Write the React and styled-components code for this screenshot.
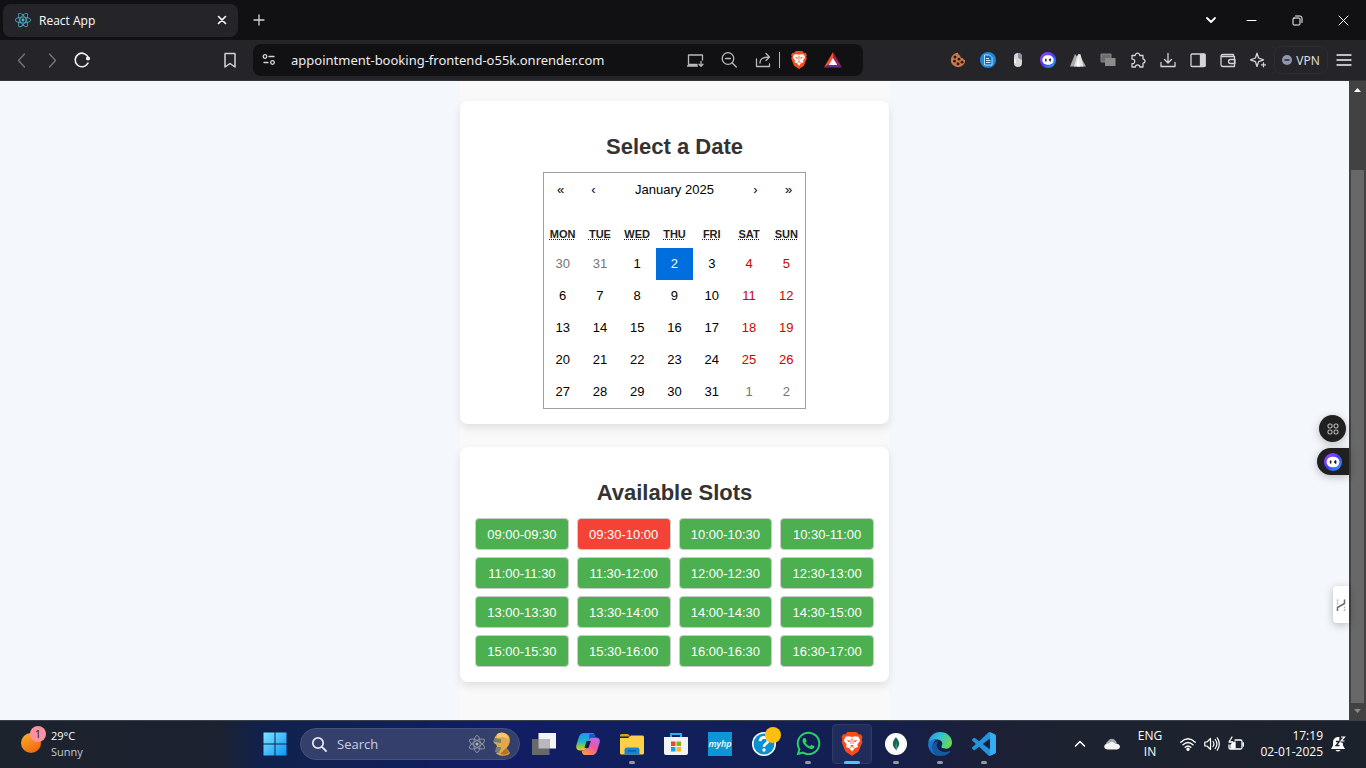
import React from "react";
import styled, { createGlobalStyle, css } from "styled-components";
import { SiMongodb, SiReact } from "react-icons/si";
import { FaWhatsapp } from "react-icons/fa";

const GlobalStyle = createGlobalStyle`
  *, *::before, *::after { box-sizing: border-box; }
  body {
    margin: 0;
    background: #111113;
    font-family: "Open Sans", "Noto Sans", sans-serif;
  }
  button, input { font: inherit; color: inherit; }
  button { padding: 0; border: 0; background: none; cursor: pointer; }
  svg { display: block; flex: none; }
`;

/* ---------- shell ---------- */

const Desktop = styled.div`
  display: flex;
  flex-direction: column;
  min-height: 100vh;
`;

const TabStrip = styled.header`
  display: flex;
  align-items: center;
  height: 40px;
  padding-left: 3px;
  background: #111113;
  color: #fff;
`;

const Tab = styled.div`
  display: flex;
  align-items: center;
  gap: 8px;
  width: 235px;
  height: 33px;
  padding: 0 8px 0 12px;
  border-radius: 8px;
  background: #252529;
  font-size: 12px;
`;

const TabTitle = styled.span`
  flex: 1;
`;

const IconButton = styled.button`
  display: flex;
  align-items: center;
  justify-content: center;
  flex: none;
  width: ${(p) => p.$w || 30}px;
  height: ${(p) => p.$h || 32}px;
  color: ${(p) => p.$color || "#d4d4d8"};
`;

const WindowControls = styled.div`
  display: flex;
  margin-left: auto;
`;

const Toolbar = styled.nav`
  display: flex;
  align-items: center;
  height: 41px;
  background: #252529;
  border-bottom: 1px solid #37323a;
`;

const NavGroup = styled.div`
  display: flex;
  flex: 0 0 253px;
  padding: 0 8px 0 7px;
`;

const Spacer = styled.span`
  flex: 1;
`;

const AddressBar = styled.div`
  display: flex;
  align-items: center;
  flex: 0 1 610px;
  min-width: 0;
  height: 32px;
  padding: 0 13px 0 0;
  border-radius: 8px;
  background: #111113;
`;

const AddressInput = styled.input`
  flex: 1;
  min-width: 0;
  margin-left: 6px;
  padding: 0;
  border: 0;
  outline: 0;
  background: none;
  color: #ececef;
  font-family: "Noto Sans", "Open Sans", sans-serif;
  font-size: 13px;
`;

const Divider = styled.span`
  width: 1px;
  height: 16px;
  margin-right: 2px;
  background: #b4b4b8;
`;

const Extensions = styled.div`
  display: flex;
  align-items: center;
  margin-left: auto;
  padding-right: 7px;
`;

const VpnButton = styled.button`
  display: flex;
  align-items: center;
  justify-content: center;
  gap: 4px;
  width: 54px;
  height: 28px;
  margin: 0 1px;
  border: 1px solid #2d2d33;
  border-radius: 8px;
  color: #e4e4e8;
  font-size: 12px;
`;

/* ---------- web page ---------- */

const Viewport = styled.div`
  position: relative;
  display: flex;
  flex: 1;
  background: #f4f7fc;
`;

const PageArea = styled.main`
  flex: 1;
  display: flex;
  justify-content: center;
  font-family: "Liberation Sans", Arial, sans-serif;
`;

const Column = styled.div`
  display: flex;
  flex-direction: column;
  gap: 23px;
  width: 429px;
  padding: 20px 0;
  background: #f9f9f9;
`;

const Card = styled.section`
  padding: 15px;
  border-radius: 8px;
  background: #fff;
  box-shadow: 0 4px 8px rgba(0, 0, 0, 0.1);
`;

const CardTitle = styled.h2`
  margin: 18px 0 12px;
  color: #333;
  font-size: 22px;
  line-height: 26px;
  text-align: center;
`;

const Calendar = styled.div`
  width: 263px;
  margin: 0 auto;
  border: 1px solid #a0a096;
  background: #fff;
`;

const CalendarNav = styled.div`
  display: flex;
  height: 32px;
  margin-bottom: 14px;
  font-size: 13px;
`;

const NavArrow = styled.button`
  width: 33px;
`;

const NavLabel = styled.button`
  flex: 1;
`;

const MonthTable = styled.table`
  width: 100%;
  table-layout: fixed;
  border-collapse: collapse;
`;

const Weekday = styled.th`
  height: 29px;
  padding: 0;
  color: #222;
  font-size: 11px;
  line-height: 14px;
  text-transform: uppercase;

  abbr { text-decoration: underline dotted; }
`;

const DayCell = styled.td`
  padding: 0;
`;

const DAY_COLORS = { other: "#757575", weekend: "#d10000", normal: "#000" };

const DayButton = styled.button`
  display: block;
  width: 100%;
  height: 32px;
  padding-bottom: 2px;
  background: ${(p) => (p.$selected ? "#006edc" : "transparent")};
  color: ${(p) => (p.$selected ? "#fff" : DAY_COLORS[p.$kind])};
  font-size: 13px;
`;

const SlotGrid = styled.div`
  display: grid;
  grid-template-columns: repeat(4, 1fr);
  gap: 7px 8px;
`;

const SlotButton = styled.button`
  height: 32px;
  border: 1px solid #ccc;
  border-radius: 4px;
  background: ${(p) => (p.$booked ? "#f44336" : "#4caf50")};
  color: #fff;
  font-size: 13px;
`;

const Scrollbar = styled.div`
  display: flex;
  flex-direction: column;
  width: 17px;
  background: #424242;
`;

const ScrollTrack = styled.div`
  flex: 1;
  display: flex;
  padding: 72px 2px 0;
`;

const ScrollThumb = styled.div`
  flex: 1;
  background: #686868;
`;

const Floating = styled.button`
  position: absolute;
  display: flex;
  align-items: center;
  justify-content: center;
  box-shadow: 0 2px 8px rgba(0, 0, 0, 0.25);
  ${(p) =>
    p.$kind === "apps" &&
    css`
      right: 20px; bottom: 278px; width: 27px; height: 27px;
      border-radius: 50%; background: #202020;
    `}
  ${(p) =>
    p.$kind === "bot" &&
    css`
      right: 17px; bottom: 245px; width: 32px; height: 27px;
      border-radius: 14px 0 0 14px; background: #202020;
    `}
  ${(p) =>
    p.$kind === "side" &&
    css`
      right: 17px; bottom: 97px; width: 16px; height: 37px;
      border-radius: 4px 0 0 4px; background: #fff;
    `}
`;

/* ---------- taskbar ---------- */

const Taskbar = styled.footer`
  display: flex;
  align-items: center;
  height: 48px;
  padding-bottom: 2px;
  border-top: 1px solid #3c414b;
  background: linear-gradient(
    90deg,
    #1d232d 0%, #1b2230 16%, #11214c 19%, #10205a 30%,
    #111d66 36%, #11205a 50%, #131f52 62%, #1b2038 72%, #1d2230 78%, #1c222c 100%
  );
  color: #fff;
  font-size: 12px;
`;

const Weather = styled.button`
  display: flex;
  align-items: center;
  gap: 4px;
  flex: 0 0 253px;
  padding-left: 19px;
  color: #fff;
  text-align: left;
  font-size: 11px;
  line-height: 16px;
`;

const Muted = styled.span`
  display: block;
  color: #c4c7cc;
`;

const SearchBox = styled.label`
  display: flex;
  align-items: center;
  width: 220px;
  height: 32px;
  margin: 0 2px 0 3px;
  padding: 0 7px 0 10px;
  border: 1px solid #47517c;
  border-radius: 16px;
  background: #343f6c;
`;

const SearchInput = styled.input`
  flex: 1;
  min-width: 0;
  margin-left: 10px;
  padding: 0;
  border: 0;
  outline: 0;
  background: none;
  font-size: 13px;

  &::placeholder { color: #cdd1de; opacity: 1; }
`;

const AppButton = styled.button`
  position: relative;
  display: flex;
  align-items: center;
  justify-content: center;
  width: 40px;
  height: 40px;
  margin: 0 2px;
  border-radius: 4px;
  border: 1px solid ${(p) => (p.$active ? "#2f3a68" : "transparent")};
  background: ${(p) => (p.$active ? "#202c5c" : "transparent")};

  &::after {
    content: "";
    position: absolute;
    bottom: -1px;
    left: 50%;
    height: 3px;
    width: ${(p) => (p.$active ? 16 : 6)}px;
    border-radius: 2px;
    background: ${(p) => (p.$active ? "#4cc2ff" : "#9499a8")};
    transform: translateX(-50%);
    display: ${(p) => (p.$active || p.$running ? "block" : "none")};
  }
`;

const HpTile = styled.span`
  display: flex;
  align-items: center;
  justify-content: center;
  width: 24px;
  height: 24px;
  background: #0b97d6;
  color: #fff;
  font-size: 9px;
  font-style: italic;
  font-weight: 600;
`;

const Tray = styled.div`
  display: flex;
  align-items: center;
  margin-left: auto;
  padding-right: 16px;
`;

const Language = styled.button`
  width: 44px;
  margin-right: 4px;
  color: #fff;
  font-size: 12px;
  line-height: 16px;
`;

const Clock = styled.button`
  width: 75px;
  margin-right: 3px;
  color: #fff;
  font-size: 12px;
  line-height: 16px;
  text-align: right;
`;

/* ---------- icons ---------- */

const Line = ({ size = 18, w = 1.3, box = 18, children, ...rest }) => (
  <svg width={size} height={size} viewBox={`0 0 ${box} ${box}`} fill="none" stroke="currentColor"
    strokeWidth={w} strokeLinecap="round" strokeLinejoin="round" aria-hidden="true" {...rest}>
    {children}
  </svg>
);

const Art = ({ size = 24, box = 24, children }) => (
  <svg width={size} height={size} viewBox={`0 0 ${box} ${box}`} aria-hidden="true">{children}</svg>
);

const BraveMark = ({ size }) => (
  <Art size={size}>
    <path d="M7.500 0h9l2.300 2.500 2-.300 1.700 3-.800 2 .600 3-3.800 9.300L12 24l-6.500-4.500L1.700 10.200l.6-3-.8-2 1.700-3 2 .3z" fill="#fb4a1b" />
    <path d="m5.500 4.800 3.700-.5 2.800.8 2.800-.8 3.700.5 1.700 4-2.800 3.500.4 2.600-3 1.300L12 19.500l-2.800-3.300-3-1.300.4-2.600-2.800-3.500z" fill="#fff" />
    <path d="m6.600 8 3.800.8-1.300 1.700zM17.400 8l-3.800.8 1.300 1.700zM10.200 13h3.600L12 14.800z" fill="#fb4a1b" />
    <path d="M11.300 6.500 10.800 12M12.700 6.500l.5 5.500M9.500 15.800l2.500-1.300 2.500 1.300" stroke="#fb4a1b" strokeWidth=".7" fill="none" />
  </Art>
);

const BotFace = ({ size = 18, id }) => (
  <Art size={size} box={18}>
    <defs>
      <linearGradient id={id} x1="0" y1="0" x2="1" y2="1">
        <stop offset="0" stopColor="#b04bff" />
        <stop offset=".5" stopColor="#4a3df5" />
        <stop offset="1" stopColor="#21b5ff" />
      </linearGradient>
    </defs>
    <circle cx="9" cy="9" r="9" fill={`url(#${id})`} />
    <rect x="2.600" y="3.700" width="12.800" height="10.600" rx="5.300" fill="#fff" />
    <path d="M6.600 7.600v3M12.200 7.600l-1.400 1.500 1.400 1.400" stroke="#17132c" strokeWidth="1.600" fill="none" />
  </Art>
);

const extensionIcons = [
  ["Cookies", <Art size={16} box={16} key="c">
    <path d="M8 .8a7.200 7.200 0 1 0 7.200 7.200c-1.500 0-2.300-.8-2.400-2-1.700.1-2.700-.9-2.500-2.300C8.900 3.300 8 2.300 8 .8z" fill="#cb7a4d" />
    <g fill="#2b1710"><circle cx="5" cy="5" r="1.500" /><circle cx="9" cy="7.200" r="1.400" /><circle cx="4.500" cy="9.200" r="1.400" />
      <circle cx="8" cy="11.800" r="1.500" /><circle cx="12" cy="10.200" r="1.400" /></g>
  </Art>],
  ["Reader", <Art size={16} box={16} key="r">
    <circle cx="8" cy="8" r="8" fill="#1e88dc" />
    <path d="M4.500 3h5l2.500 2.500V13H4.500z" fill="#1668b4" stroke="#b7dcff" />
    <path d="M6 6.500h3M6 8.500h4.500M6 10.500h4.500" stroke="#d4ebff" />
  </Art>],
  ["Mouse", <Art size={16} box={16} key="m">
    <rect x="4" y="1" width="8" height="14" rx="4" fill="#d8d6d2" />
    <path d="M8 1a4 4 0 0 1 4 4v3L8 6z" fill="#8b90a4" />
    <path d="M5 7v4" stroke="#f5f5f3" strokeWidth="1.500" />
  </Art>],
  ["Assistant", <BotFace size={16} id="botToolbar" key="b" />],
  ["Peaks", <Art size={16} box={16} key="p">
    <path d="M0 14.500 5 2l2 2.500L9 2l7 12.500z" fill="#a9a9a9" />
    <path d="M4 14.500 7 4.500 8.500 2l2 .2 3 12.300z" fill="#e4e4e4" />
    <path d="M8.200 5 7 14.500h3z" fill="#fff" />
  </Art>],
  ["Layers", <Art size={16} box={16} key="l">
    <path d="M1 2h10v8H1z" fill="#6d6d6d" stroke="#858585" />
    <path d="M5 6h10.500v8H5z" fill="#8b8b8b" />
  </Art>],
  ["Extensions", <Line key="e"><path d="M3 4.500h3.200a2.300 2.300 0 1 1 4.600 0H14v3.600a2 2 0 1 1 0 4V16h-3.200a2.200 2.200 0 0 0-4.400 0H3v-3.400a2.300 2.300 0 1 0 0-4.500z" /></Line>],
  ["Downloads", <Line key="d"><path d="M9 2.500v9M5.500 8.500 9 12l3.500-3.500M2 11.500v4h14v-4" /></Line>],
  ["Sidebar", <Line key="s"><rect x="2" y="3" width="14" height="12.500" rx="1" /><path d="M11.500 3.500H16V15h-4.500z" fill="currentColor" /></Line>],
  ["Wallet", <Line key="w"><path d="M14.500 5.500v-2H4a2 2 0 0 0-2 1.500v9a2 2 0 0 0 2 1.500h11.500V5.500H3M16 8.500h-4.500a2 2 0 0 0 0 4H16z" /></Line>],
  ["Leo AI", <Line key="a"><path d="M8 2.200 9.600 7l4.900 1.800-4.900 1.800L8 15.500l-1.600-4.900L1.500 8.800 6.400 7zM14.500 11.800v4M12.500 13.800h4" /></Line>],
];

const taskApps = [
  { name: "Task view", icon: <Art><path d="M6.500 1H24v15.500H6.500z" fill="#f4f4f5" /><path d="M0 7h17.500v16H0z" fill="#68686a" /><path d="M6.500 7h11v9.500h-11z" fill="#b9b9bb" /></Art> },
  { name: "Copilot", icon: (
    <Art>
      <defs>
        <linearGradient id="coA" x1="0" y1="0" x2="0" y2="1"><stop offset="0" stopColor="#1c92f4" /><stop offset=".5" stopColor="#22b8c8" /><stop offset=".8" stopColor="#a5c83a" /><stop offset="1" stopColor="#f9c52c" /></linearGradient>
        <linearGradient id="coB" x1="0.800" y1="0" x2="0.200" y2="1"><stop offset="0" stopColor="#b56bf3" /><stop offset=".5" stopColor="#ef5a9a" /><stop offset="1" stopColor="#ff9a4a" /></linearGradient>
      </defs>
      <path d="M8 1h8c2 0 2.600 1.600 3.200 3.500L16 5.500c-2 0-2.700 1-3.300 3L11 15c-.6 2.200-1.600 3.500-4 3.500H4c-3 0-4.400-2-3.600-5.500L3 4.800C3.800 2.300 5.400 1 8 1z" fill="url(#coA)" />
      <path d="M17 5.500h3c3 0 4.500 2 3.600 5.300L21 19c-.9 2.700-2.500 4-5 4H9c-2 0-2.800-1.500-3.300-3.800L7 18.500c2.400 0 3.400-1.300 4-3.500l1.700-6.500c.6-2 1.800-3 4.300-3z" fill="url(#coB)" />
      <path d="M13.500 2H16c2 0 2.600 1.600 3.200 3.500h-3c-1.500 0-2.400.6-3 1.700z" fill="#1656c9" />
      <path d="m10.500 9-2 7h4l2.300-7z" fill="#10205a" />
    </Art>) },
  { name: "File Explorer", running: true, icon: <Art><path d="M0 3.500Q0 2 1.500 2H8l2.500 2.500H0z" fill="#e0a100" /><path d="M0 6h8l3-2.500h11.500Q24 3.500 24 5v16q0 1.500-1.500 1.500h-21Q0 22.500 0 21z" fill="#ffcf48" /><path d="M4.500 22.500V18q0-2.500 2.500-2.500h10q2.500 0 2.500 2.500v4.500z" fill="#1583d8" /><path d="M8 19h8" stroke="#0b5ea8" strokeWidth="1.500" /></Art> },
  { name: "Microsoft Store", icon: <Art><path d="M7 6V2h10v4" fill="none" stroke="#28b0f0" strokeWidth="2" /><path d="M0 5h24v16q0 2-2 2H2q-2 0-2-2z" fill="#f2f3f5" /><path d="M7 9.500h4.500V14H7z" fill="#e8492b" /><path d="M12.500 9.500H17V14h-4.500z" fill="#7cb713" /><path d="M7 15h4.500v4.500H7z" fill="#10a2ee" /><path d="M12.500 15H17v4.500h-4.500z" fill="#fdb815" /></Art> },
  { name: "myHP", icon: <HpTile>myhp</HpTile> },
  { name: "Get help", icon: (
    <Art size={34} box={34}>
      <circle cx="17" cy="17" r="12" fill="#fff" /><circle cx="17" cy="17" r="10.500" fill="#0d90cf" />
      <path d="M13 14.200q.5-3.900 4.300-3.900 3.700.2 3.700 3.300 0 2.200-2.200 3.300-1.800 1-1.800 2.800" fill="none" stroke="#fff" strokeWidth="2.700" />
      <circle cx="17" cy="23" r="1.700" fill="#fff" />
      <circle cx="26" cy="8" r="8" fill="#ffbf0f" />
    </Art>) },
  { name: "WhatsApp", running: true, icon: <FaWhatsapp size={27} color="#25d366" /> },
  { name: "Brave", active: true, icon: <BraveMark size={24} /> },
  { name: "MongoDB Compass", running: true, icon: <Art><circle cx="12" cy="12" r="11" fill="#fff" /><svg x="5" y="5" width="14" height="14"><SiMongodb size={14} color="#0f6b4d" /></svg></Art> },
  { name: "Edge", running: true, icon: (
    <Art>
      <defs>
        <linearGradient id="edA" x1="0" y1="0" x2="1" y2=".4"><stop offset="0" stopColor="#2492e0" /><stop offset=".5" stopColor="#32bfd8" /><stop offset="1" stopColor="#62d95a" /></linearGradient>
        <linearGradient id="edB" x1="0" y1="0" x2="0" y2="1"><stop offset="0" stopColor="#1b7fd6" /><stop offset="1" stopColor="#1466bd" /></linearGradient>
      </defs>
      <path d="M.2 11C1 4.500 6 0 12 0c7 0 12 5 12 10.500 0 4-3 6.300-6.500 6.300-2.800 0-4.300-1-4.300-2 0-.7 1-1.200 1-3C14.200 9 11.500 7.500 8.500 7.500 4 7.500.8 9.500.2 11z" fill="url(#edA)" />
      <path d="M.1 12.500C.5 8.500 4.300 7.300 8.500 7.500c-2.700 1.700-4 4.300-4 7.500 0 4.400 3 8 7.500 9C5 24 .1 18.500.1 12.500z" fill="url(#edB)" />
      <path d="M10 9.500C8.800 11 8.300 13 9 15c1.200 3.400 4.500 5 8.200 5 1.700 0 3.200-.5 4.300-1 .7-.3 1 .2.700.7C20 22.700 16.500 24 13 24c-5 0-8.500-4-8.500-9 0-3 2-5.500 5.500-5.500z" fill="#155a9e" />
      <path d="M13.900 9.800c1 2-.7 3.700-.7 5 0 1 1.500 2 4.300 2-2 1-6 .6-7.500-2.300-.8-1.800 0-5 3.900-4.700z" fill="#14225a" />
    </Art>) },
  { name: "Visual Studio Code", running: true, icon: <Art><path fill="#2493dc" d="M23.150 2.587L18.210.210a1.494 1.494 0 0 0-1.705.290l-9.460 8.630-4.120-3.128a.999.999 0 0 0-1.276.057L.327 7.261A1 1 0 0 0 .326 8.740L3.899 12 .326 15.260a1 1 0 0 0 .001 1.479L1.650 17.940a.999.999 0 0 0 1.276.057l4.120-3.128 9.460 8.630a1.492 1.492 0 0 0 1.704.290l4.942-2.377A1.500 1.500 0 0 0 24 20.060V3.939a1.500 1.500 0 0 0-.850-1.352zm-5.146 14.861L10.826 12l7.178-5.448v10.896z" /><path d="M18 .3 22.500 2.300Q24 3 24 4.500v15q0 1.500-1.500 2.300L18 23.700z" fill="#35adf3" /></Art> },
];

/* ---------- data ---------- */

const WEEKDAYS = ["Monday", "Tuesday", "Wednesday", "Thursday", "Friday", "Saturday", "Sunday"];

const WEEKS = [
  [30, 31, 1, 2, 3, 4, 5],
  [6, 7, 8, 9, 10, 11, 12],
  [13, 14, 15, 16, 17, 18, 19],
  [20, 21, 22, 23, 24, 25, 26],
  [27, 28, 29, 30, 31, 1, 2],
];

const SLOTS = Array.from({ length: 16 }, (_, i) => {
  const at = (n) => `${String(9 + Math.floor(n / 2)).padStart(2, "0")}:${n % 2 ? "30" : "00"}`;
  return `${at(i)}-${at(i + 1)}`;
});

const dayKind = (week, col, day) => {
  if ((week === 0 && day > 20) || (week === 4 && day < 10)) return "other";
  return col > 4 ? "weekend" : "normal";
};

/* ---------- sections ---------- */

const BrowserTabs = () => (
  <TabStrip>
    <Tab>
      <SiReact size={16} color="#4fb6cf" />
      <TabTitle>React App</TabTitle>
      <IconButton $w={16} $h={16} $color="#fff" aria-label="Close tab">
        <Line size={10} box={10} w={1.6}><path d="m1.500 1.500 7 7M8.500 1.500l-7 7" /></Line>
      </IconButton>
    </Tab>
    <IconButton $w={42} aria-label="New tab"><Line size={12} box={12}><path d="M6 1v10M1 6h10" /></Line></IconButton>
    <WindowControls>
      <IconButton $w={34} $color="#fff" aria-label="Search tabs"><Line size={12} box={12} w={1.8}><path d="m2 4 4 4 4-4" /></Line></IconButton>
      <IconButton $w={46} $color="#fff" aria-label="Minimize"><Line size={11} box={11} w={1}><path d="M1 5.500h9" /></Line></IconButton>
      <IconButton $w={46} $color="#fff" aria-label="Restore"><Line size={11} box={11} w={1}><rect x="1" y="3" width="7" height="7" rx="1" /><path d="M3.500 1H8q2 0 2 2v4.500" /></Line></IconButton>
      <IconButton $w={46} $color="#fff" aria-label="Close"><Line size={11} box={11} w={1}><path d="m1 1 9 9M10 1l-9 9" /></Line></IconButton>
    </WindowControls>
  </TabStrip>
);

const BrowserToolbar = () => (
  <Toolbar aria-label="Browser">
    <NavGroup>
      <IconButton $color="#75757b" aria-label="Back"><Line><path d="m11.500 3-6 6.500 6 6.500" /></Line></IconButton>
      <IconButton $color="#75757b" aria-label="Forward"><Line><path d="m6.500 3 6 6.500-6 6.500" /></Line></IconButton>
      <IconButton $color="#f2f2f4" aria-label="Reload">
        <Line w={1.600}><path d="M15 12.200A6.800 6.800 0 1 1 15.500 7" /><circle cx="15" cy="7.500" r="1.300" fill="currentColor" /></Line>
      </IconButton>
      <Spacer />
      <IconButton aria-label="Bookmark"><Line w={1.500}><path d="M4.500 2.500h9q.5 0 .5.500v13l-5-3.500L4 16V3q0-.500.500-.500z" /></Line></IconButton>
    </NavGroup>
    <AddressBar>
      <IconButton $w={32} aria-label="Site information">
        <Line size={14} box={14}><circle cx="3" cy="3.500" r="1.800" /><path d="M7 3.500h5M2 9.500h4" /><circle cx="10.500" cy="9.500" r="1.800" /></Line>
      </IconButton>
      <AddressInput aria-label="Address" defaultValue="appointment-booking-frontend-o55k.onrender.com" />
      <IconButton $w={34} $color="#b8b8bd" aria-label="Install app"><Line><path d="M11 13.500H2.500V4h14v5M1.500 15h10M15 10.500v4.500M13 13.200l2 2 2-2" /></Line></IconButton>
      <IconButton $w={34} $color="#b8b8bd" aria-label="Zoom"><Line><circle cx="8" cy="7.500" r="5.800" /><path d="m12.300 12 4 4M5.500 7.500h5" /></Line></IconButton>
      <IconButton $w={33} $color="#b8b8bd" aria-label="Share"><Line><path d="M2.500 8v7.500h13V13M6 12c0-4 2.500-6 9-6M12 2.500 15.500 6 12 9.500" /></Line></IconButton>
      <Divider />
      <IconButton $w={34} aria-label="Brave Shields"><BraveMark size={18} /></IconButton>
      <IconButton $w={34} aria-label="Brave Rewards">
        <Art size={18} box={18}><path d="M9 1 0 16.500 9 11z" fill="#ff4f24" /><path d="M9 1v10l9 5.500z" fill="#9e1f63" /><path d="M0 16.500h18L9 11z" fill="#662d91" /><path d="m9 7-4.300 7h8.600z" fill="#fff" /></Art>
      </IconButton>
    </AddressBar>
    <Extensions>
      {extensionIcons.map(([name, icon]) => <IconButton key={name} aria-label={name}>{icon}</IconButton>)}
      <VpnButton>
        <Art size={10} box={10}><circle cx="5" cy="5" r="5" fill="#9095ae" /><path d="M2.500 5h5" stroke="#252529" strokeWidth="1.500" /></Art>
        VPN
      </VpnButton>
      <IconButton $color="#f2f2f4" aria-label="Menu"><Line><path d="M2 4h14M2 9h14M2 14h14" /></Line></IconButton>
    </Extensions>
  </Toolbar>
);

const DatePicker = () => (
  <Calendar>
    <CalendarNav>
      <NavArrow aria-label="Previous year">«</NavArrow>
      <NavArrow aria-label="Previous month">‹</NavArrow>
      <NavLabel>January 2025</NavLabel>
      <NavArrow aria-label="Next month">›</NavArrow>
      <NavArrow aria-label="Next year">»</NavArrow>
    </CalendarNav>
    <MonthTable>
      <thead>
        <tr>{WEEKDAYS.map((d) => <Weekday key={d} scope="col"><abbr title={d}>{d.slice(0, 3)}</abbr></Weekday>)}</tr>
      </thead>
      <tbody>
        {WEEKS.map((week, w) => (
          <tr key={w}>
            {week.map((day, col) => (
              <DayCell key={col}>
                <DayButton $kind={dayKind(w, col, day)} $selected={w === 0 && day === 2}>{day}</DayButton>
              </DayCell>
            ))}
          </tr>
        ))}
      </tbody>
    </MonthTable>
  </Calendar>
);

const WindowsTaskbar = () => (
  <Taskbar>
    <Weather>
      <svg width="28" height="36" viewBox="0 0 28 36" aria-hidden="true">
        <defs><linearGradient id="sun" x1="0" y1="0" x2="0.600" y2="1"><stop offset="0" stopColor="#f5b52c" /><stop offset="1" stopColor="#f2690d" /></linearGradient></defs>
        <circle cx="12" cy="17" r="10" fill="url(#sun)" />
        <circle cx="19" cy="8" r="8" fill="#ff909d" />
        <text x="19" y="12" textAnchor="middle" fontSize="11" fill="#1c1c1c">1</text>
      </svg>
      <span>29°C<Muted>Sunny</Muted></span>
    </Weather>
    <AppButton aria-label="Start">
      <Art>
        <defs><linearGradient id="win" x1="0" y1="0" x2="1" y2="1"><stop offset="0" stopColor="#7ce6ff" /><stop offset="1" stopColor="#0c93f5" /></linearGradient></defs>
        <path d="M.500.500h11v11H.500zM12.500.500h11v11h-11zM.500 12.500h11v11H.500zM12.500 12.500h11v11h-11z" fill="url(#win)" />
      </Art>
    </AppButton>
    <SearchBox>
      <Line size={16} box={16} w={1.800} color="#e2e5ee"><circle cx="7" cy="7" r="5.200" /><path d="m11 11 4 4" /></Line>
      <SearchInput type="search" placeholder="Search" aria-label="Search" />
      <svg width="46" height="26" viewBox="0 0 46 26" fill="none" aria-hidden="true">
        <g stroke="#8c94a2"><ellipse cx="11" cy="13" rx="8.500" ry="3.200" transform="rotate(30 11 13)" /><ellipse cx="11" cy="13" rx="8.500" ry="3.200" transform="rotate(150 11 13)" /><ellipse cx="11" cy="13" rx="8.500" ry="3.200" transform="rotate(90 11 13)" /></g>
        <circle cx="11" cy="13" r="1.500" fill="#b2b8c2" />
        <path d="M29 6q3-5 9-4 6 1.500 6 7 0 4.500-3.500 8l3.500 5q-2 3.500-10 2.500l-4-2 5-5q-4 0-4.500-3 .5-1-2-2-1.500-2-.5-4z" fill="#e3a847" />
        <path d="M31 3q5-3 9 0l3 5-6-2-6 1z" fill="#f3cb6c" />
        <path d="m28 7 7 1v4l-7-1zM30 16h5l-2 6-4-1z" fill="#76806f" />
        <path d="m34 23 6-6 3 5q-3 3-9 1z" fill="#af7428" />
      </svg>
    </SearchBox>
    {taskApps.map((app) => (
      <AppButton key={app.name} aria-label={app.name} $active={app.active} $running={app.running}>{app.icon}</AppButton>
    ))}
    <Tray>
      <IconButton $w={32} $color="#fff" aria-label="Hidden icons"><Line size={12} box={12} w={1.600}><path d="m1.500 8 4.500-4.500L10.500 8" /></Line></IconButton>
      <IconButton $w={32} aria-label="OneDrive">
        <Art size={16} box={16}><path d="M4 12a4 4 0 0 1 0-7Q7 1 11 4l2 3z" fill="#a4a6ab" /><path d="M3.500 13.500Q0 13 .2 10 1 7 4.500 7.500 8 4 11 7.500q4-.5 5 2.500 0 3-3 3.500z" fill="#f4f4f4" /></Art>
      </IconButton>
      <Language>ENG<br />IN</Language>
      <IconButton $w={24} $color="#fff" aria-label="Network">
        <Line size={16} box={16} w={1.400}><path d="M.8 6.200Q8-.5 15.200 6.200M3 8.800q5-4.800 10 0M5.200 11.200q2.800-2.600 5.600 0" /><circle cx="8" cy="13.200" r="1" fill="currentColor" /></Line>
      </IconButton>
      <IconButton $w={24} $color="#fff" aria-label="Volume">
        <Line size={16} box={16} w={1.200}><path d="M.8 6H3l3.500-3.500v11L3 10H.8zM9 5.500q1.800 2.500 0 5M11.200 3.500q3.400 4.500 0 9M13.300 1.800q4 6.200 0 12.400" /></Line>
      </IconButton>
      <IconButton $w={24} $color="#fff" aria-label="Battery">
        <Line size={16} box={16} w={1.300}><path d="M7 4h5.500q1.500 0 1.500 1.500v6q0 1.500-1.500 1.500h-10Q1 13 1 11.500V9M15.500 7v3" /><path d="M3 12V9l4-3v6z" fill="currentColor" /><path d="M4 1 1 6h4L3.500 9" /></Line>
      </IconButton>
      <Spacer />
      <Clock>17:19<br />02-01-2025</Clock>
      <IconButton $w={24} aria-label="Notifications">
        <Art size={16} box={16}>
          <path d="M8 1Q3 1.500 3 6.500v3L1 13h14l-2-3.500V8l-2-7z" fill="#fff" /><path d="M5.500 14h5q-2.500 3-5 0z" fill="#fff" />
          <path d="M6 5.500h3.500L6 9.500h3.500" stroke="#1c222c" strokeWidth="1.300" fill="none" />
          <circle cx="13" cy="3" r="3.800" fill="#1c222c" /><path d="M11 1h3.500L11 5h3.500" stroke="#fff" strokeWidth="1.200" fill="none" />
        </Art>
      </IconButton>
    </Tray>
  </Taskbar>
);

export default function App() {
  return (
    <Desktop>
      <GlobalStyle />
      <BrowserTabs />
      <BrowserToolbar />
      <Viewport>
        <PageArea>
          <Column>
            <Card>
              <CardTitle>Select a Date</CardTitle>
              <DatePicker />
            </Card>
            <Card>
              <CardTitle>Available Slots</CardTitle>
              <SlotGrid>
                {SLOTS.map((slot) => <SlotButton key={slot} $booked={slot === "09:30-10:00"}>{slot}</SlotButton>)}
              </SlotGrid>
            </Card>
          </Column>
        </PageArea>
        <Floating $kind="apps" aria-label="Apps">
          <Line size={12} box={12} w={1.100} color="#b8b8b8"><rect x="1" y="1" width="4" height="4" rx="1.600" /><rect x="7" y="1" width="4" height="4" rx="1.600" /><rect x="1" y="7" width="4" height="4" rx="1.600" /><rect x="7" y="7" width="4" height="4" rx="1.600" /></Line>
        </Floating>
        <Floating $kind="bot" aria-label="Open assistant"><BotFace size={18} id="botFloat" /></Floating>
        <Floating $kind="side" aria-label="Side panel">
          <Line size={12} box={12} w={1.500} color="#6c6c6c"><path d="M2.500 12V8.500l7-4V1" /><path d="M2.500 5V1M9.500 11.500V8" stroke="#b9b9b9" strokeDasharray="1 2" /></Line>
        </Floating>
        <Scrollbar>
          <Art size={17} box={17}><path d="M5 11h7L8.500 7z" fill="#fff" /></Art>
          <ScrollTrack><ScrollThumb /></ScrollTrack>
          <Art size={17} box={17}><path d="M5 6h7l-3.500 4z" fill="#8b8b8b" /></Art>
        </Scrollbar>
      </Viewport>
      <WindowsTaskbar />
    </Desktop>
  );
}
